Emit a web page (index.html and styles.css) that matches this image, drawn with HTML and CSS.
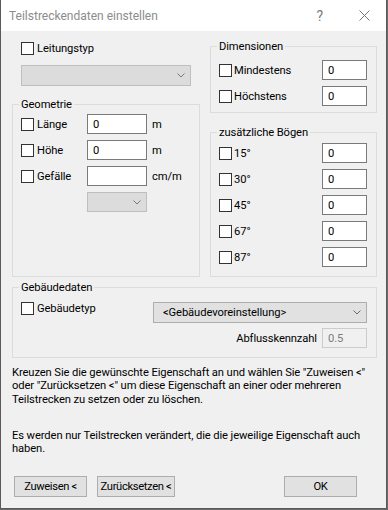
FILE: index.html
```html
<!DOCTYPE html>
<html lang="de">
<head>
    <meta charset="UTF-8">
    <title>Teilstreckendaten einstellen</title>
    <link rel="stylesheet" href="styles.css">
</head>
<body>
<div class="dialog">
    <div class="titlebar">
        <span class="title">Teilstreckendaten einstellen</span>
        <span class="help">?</span>
        <svg class="close" viewBox="0 0 11 11"><path d="M0.5 0.5 L10.5 10.5 M10.5 0.5 L0.5 10.5" stroke="#767676" stroke-width="1" fill="none"/></svg>
    </div>

    <div class="content">
        <div class="top">
            <div class="col">
                <div class="check leitung"><span class="box"></span>Leitungstyp</div>
                <div class="combo disabled combo-wide">
                    <span></span>
                    <svg class="chev" viewBox="0 0 8 5"><path d="M0.5 0.5 L4 4 L7.5 0.5" stroke="#7a7a7a" fill="none"/></svg>
                </div>

                <fieldset class="group geometrie">
                    <legend>Geometrie</legend>
                    <div class="field">
                        <div class="check"><span class="box"></span>Länge</div>
                        <div class="input">0</div><span class="unit">m</span>
                    </div>
                    <div class="field">
                        <div class="check"><span class="box"></span>Höhe</div>
                        <div class="input">0</div><span class="unit">m</span>
                    </div>
                    <div class="field">
                        <div class="check"><span class="box"></span>Gefälle</div>
                        <div class="input"></div><span class="unit">cm/m</span>
                    </div>
                    <div class="field">
                        <div class="combo disabled combo-small">
                            <span></span>
                            <svg class="chev" viewBox="0 0 8 5"><path d="M0.5 0.5 L4 4 L7.5 0.5" stroke="#7a7a7a" fill="none"/></svg>
                        </div>
                    </div>
                </fieldset>
            </div>

            <div class="col">
                <fieldset class="group dims">
                    <legend>Dimensionen</legend>
                    <div class="field spread">
                        <div class="check"><span class="box"></span>Mindestens</div>
                        <div class="input short">0</div>
                    </div>
                    <div class="field spread">
                        <div class="check"><span class="box"></span>Höchstens</div>
                        <div class="input short">0</div>
                    </div>
                </fieldset>

                <fieldset class="group boegen">
                    <legend>zusätzliche Bögen</legend>
                    <div class="field spread">
                        <div class="check"><span class="box"></span>15°</div>
                        <div class="input short">0</div>
                    </div>
                    <div class="field spread">
                        <div class="check"><span class="box"></span>30°</div>
                        <div class="input short">0</div>
                    </div>
                    <div class="field spread">
                        <div class="check"><span class="box"></span>45°</div>
                        <div class="input short">0</div>
                    </div>
                    <div class="field spread">
                        <div class="check"><span class="box"></span>67°</div>
                        <div class="input short">0</div>
                    </div>
                    <div class="field spread">
                        <div class="check"><span class="box"></span>87°</div>
                        <div class="input short">0</div>
                    </div>
                </fieldset>
            </div>
        </div>

        <fieldset class="group gebaeude">
            <legend>Gebäudedaten</legend>
            <div class="geb-row">
                <div class="check geb-check"><span class="box"></span>Gebäudetyp</div>
                <div class="combo combo-geb">
                    <span>&lt;Gebäudevoreinstellung&gt;</span>
                    <svg class="chev" viewBox="0 0 8 5"><path d="M0.5 0.5 L4 4 L7.5 0.5" stroke="#6a6a6a" fill="none"/></svg>
                </div>
            </div>
            <div class="abfluss">
                <span>Abflusskennzahl</span>
                <div class="input short off">0.5</div>
            </div>
        </fieldset>

        <p class="hint">Kreuzen Sie die gewünschte Eigenschaft an und wählen Sie "Zuweisen &lt;"<br>oder "Zurücksetzen &lt;" um diese Eigenschaft an einer oder mehreren<br>Teilstrecken zu setzen oder zu löschen.</p>
        <p class="hint">Es werden nur Teilstrecken verändert, die die jeweilige Eigenschaft auch<br>haben.</p>

        <div class="buttons">
            <div class="btn btn-assign">Zuweisen &lt;</div>
            <div class="btn btn-reset">Zurücksetzen &lt;</div>
            <div class="btn btn-ok">OK</div>
        </div>
    </div>
</div>
</body>
</html>
```

FILE: styles.css
```css
* { box-sizing: border-box; }
html, body { margin: 0; }
body {
    background: #6b6b6b;
    font-family: Roboto, "Liberation Sans", sans-serif;
    font-size: 11.2px;
    letter-spacing: -0.1px;
    color: #000;
}
.dialog {
    width: 387px;
    height: 509px;
    background: #f0f0f0;
    border: 1px solid #5a5a5a;
    border-top: 0;
    display: flex;
    flex-direction: column;
}
.titlebar {
    height: 31px;
    flex: none;
    background: #fff;
    display: flex;
    align-items: center;
    padding-left: 8px;
    letter-spacing: 0;
}
.title { color: #8c8c8c; font-size: 12px; }
.help { margin-left: auto; font-size: 14px; color: #7a7a7a; }
.close { width: 11px; height: 11px; margin: 0 16px 0 36px; }

.content {
    flex: 1;
    display: flex;
    flex-direction: column;
    padding: 8px 9px 11px 11px;
}
.top {
    display: grid;
    grid-template-columns: 188px 167px;
    column-gap: 10px;
}
.col { display: flex; flex-direction: column; }

.check { display: flex; align-items: center; gap: 3px; line-height: 15px; white-space: nowrap; }
.box {
    width: 13px;
    height: 13px;
    flex: none;
    border: 1px solid #333;
    background: #fff;
}
.leitung { margin: 2px 0 0 9px; }

.combo {
    height: 21px;
    background: #e1e1e1;
    border: 1px solid #adadad;
    display: flex;
    align-items: center;
    justify-content: space-between;
    padding: 0 5px 0 9px;
    white-space: nowrap;
}
.combo.disabled { background: #dcdcdc; border-color: #bfbfbf; }
.chev { width: 8px; height: 5px; flex: none; }
.combo-wide { width: 170px; margin: 9px 0 0 9px; }
.combo-small { width: 60px; height: 20px; margin-left: 66px; }
.combo-geb { width: 214px; }

.group {
    margin: 0;
    padding: 0 8px;
    min-width: 0;
    border: 1px solid #dcdcdc;
    display: flex;
    flex-direction: column;
    gap: 6px;
}
.group legend { padding: 0 2px; margin-left: -2px; line-height: 15px; }
.geometrie { flex: 1; margin-top: 11px; padding-top: 2px; }
.dims { padding: 6px 9px 6px 8px; }
.boegen { flex: 1; margin-top: 12px; padding: 3px 9px 9px 8px; }

.field { display: flex; align-items: center; height: 20px; }
.field .check { width: 66px; }
.field.spread { justify-content: space-between; }
.field.spread .check { width: auto; gap: 2px; }

.input {
    width: 60px;
    height: 20px;
    flex: none;
    background: #fff;
    border: 1px solid #7a7a7a;
    padding-left: 5px;
    display: flex;
    align-items: center;
}
.input.short { width: 45px; }
.input.off { background: #f0f0f0; border-color: #cccccc; color: #7a7a7a; }
.unit { margin-left: 5px; }

.gebaeude { margin-top: 3px; padding: 7px 9px 9px 8px; gap: 5px; }
.geb-row { display: flex; justify-content: space-between; align-items: flex-start; }
.geb-check { margin-top: -1px; }
.abfluss { display: flex; justify-content: flex-end; align-items: center; gap: 5px; }

.hint { margin: 8px 0 0; line-height: 13.33px; white-space: nowrap; }
.hint + .hint { margin-top: 23px; }

.buttons { margin-top: auto; display: flex; padding: 0 20px 0 2px; }
.btn {
    height: 21px;
    background: #e1e1e1;
    border: 1px solid #adadad;
    display: flex;
    align-items: center;
    justify-content: center;
    white-space: nowrap;
    letter-spacing: -0.35px;
}
.btn-assign { width: 73px; }
.btn-reset { width: 78px; margin-left: 10px; }
.btn-ok { width: 73px; margin-left: auto; }
```
